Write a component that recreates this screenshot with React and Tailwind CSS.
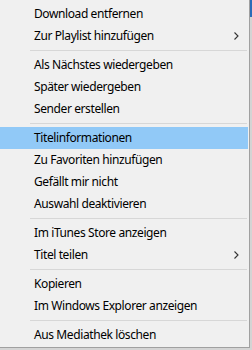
const groups = [
  [
    { label: "Download entfernen" },
    { label: "Zur Playlist hinzufügen", sub: true },
  ],
  [
    { label: "Als Nächstes wiedergeben" },
    { label: "Später wiedergeben" },
    { label: "Sender erstellen" },
  ],
  [
    { label: "Titelinformationen", active: true },
    { label: "Zu Favoriten hinzufügen" },
    { label: "Gefällt mir nicht" },
    { label: "Auswahl deaktivieren" },
  ],
  [
    { label: "Im iTunes Store anzeigen" },
    { label: "Titel teilen", sub: true },
  ],
  [
    { label: "Kopieren" },
    { label: "Im Windows Explorer anzeigen" },
  ],
  [{ label: "Aus Mediathek löschen" }],
];

function Chevron() {
  return (
    <svg width="5" height="8" viewBox="0 0 5 8" className="mr-[9px]">
      <path d="M0.5 0.5 L4 4 L0.5 7.5" fill="none" stroke="#333" strokeWidth="1.1" />
    </svg>
  );
}

function MenuItem({ item }) {
  return (
    <div
      className={`flex items-center justify-between h-[22px] pl-[34px] mr-[1px] ${
        item.active ? "bg-[#91c9f7]" : ""
      }`}
    >
      <span className="text-[12px] text-black leading-none tracking-[-0.4px]">
        {item.label}
      </span>
      {item.sub && <Chevron />}
    </div>
  );
}

export default function App() {
  return (
    <div
      className="w-[252px] h-[350px] flex bg-[#d4d4d4]"
      style={{ fontFamily: '"Noto Sans", "Open Sans", sans-serif' }}
    >
      <div className="w-[250px] h-[348px] bg-[#f0f0f0] border-r border-b border-[#a0a0a0] pt-[3px] flex flex-col">
        {groups.map((group, gi) => (
          <div key={gi}>
            {gi > 0 && (
              <div className="h-[7px] flex items-center pl-[30px] pr-[2px]">
                <div className="h-px w-full bg-[#d7d7d7]" />
              </div>
            )}
            {group.map((item) => (
              <MenuItem key={item.label} item={item} />
            ))}
          </div>
        ))}
      </div>
      <div className="w-[2px] flex flex-col">
        <div className="h-[17px] bg-[#2b6cb8]" />
      </div>
    </div>
  );
}
